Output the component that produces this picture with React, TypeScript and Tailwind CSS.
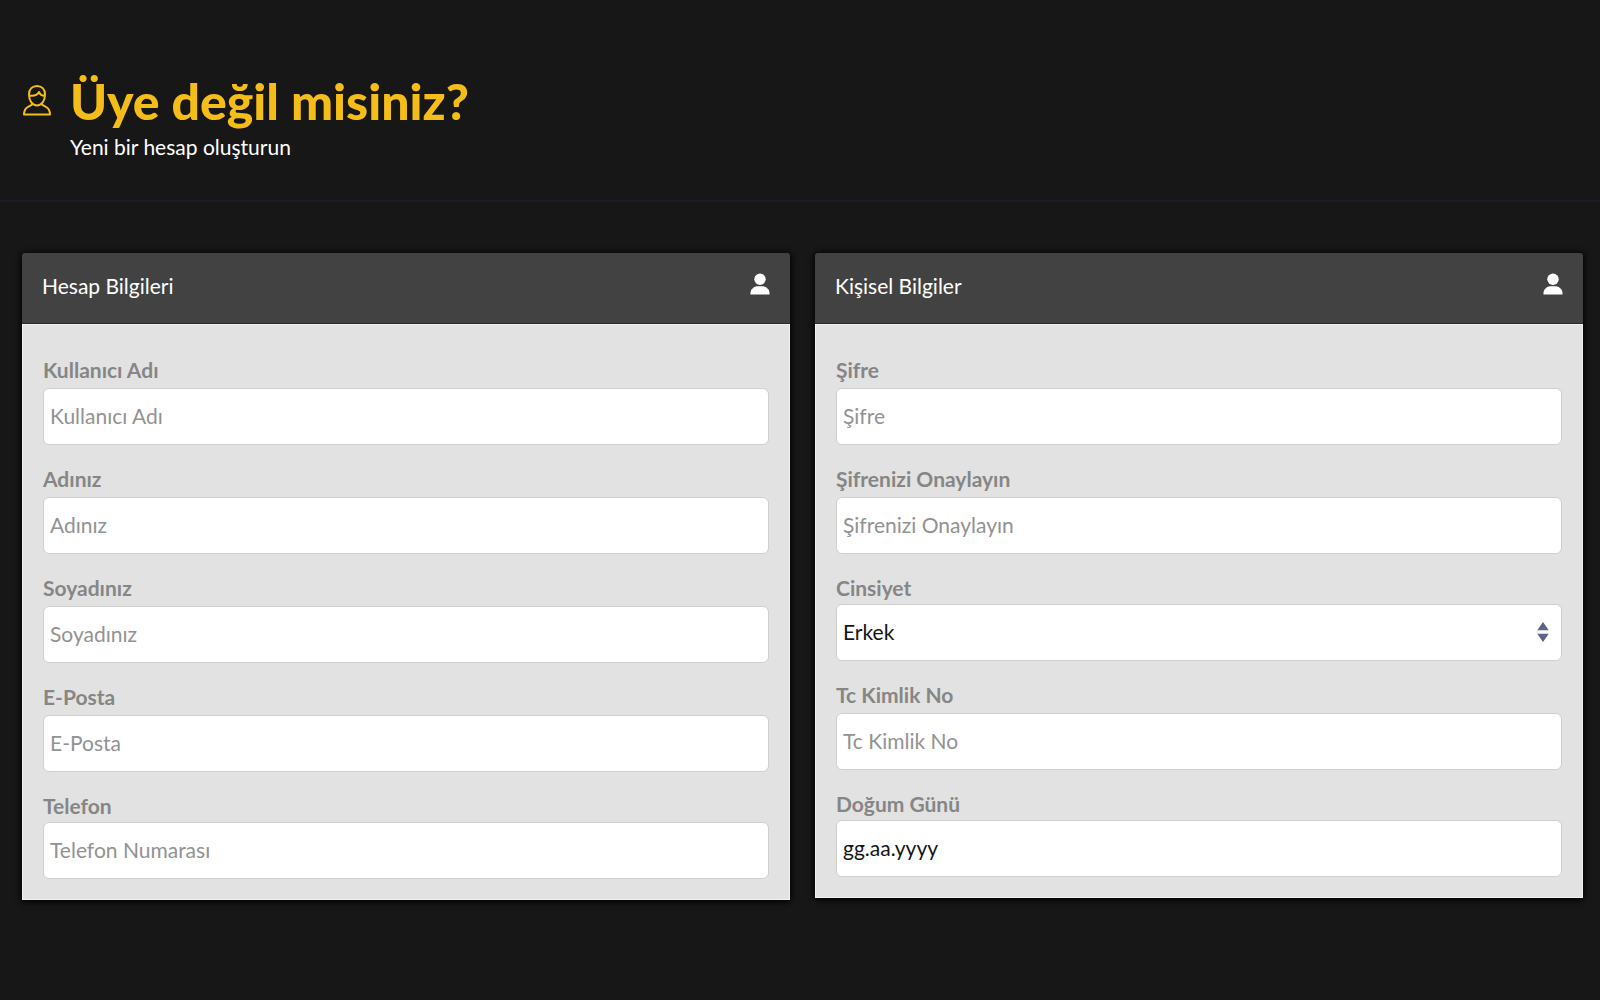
import { useId, type ReactNode } from "react";

interface FieldProps {
  label: string;
  placeholder?: string;
  type?: string;
  compact?: boolean;
  dark?: boolean;
}

const controlClass =
  "block h-[57px] w-full rounded-md border border-[#cfcfcf] bg-white px-[6px] pb-0.5 text-[21px] outline-none focus:border-[#f5bd18]";
const labelClass = "block text-[21px] leading-7 font-bold text-[#868686]";

function Field({ label, placeholder, type = "text", compact, dark }: FieldProps) {
  const id = useId();
  return (
    <div className={compact ? "flex flex-col gap-0.5" : "flex flex-col gap-1"}>
      <label htmlFor={id} className={labelClass}>
        {label}
      </label>
      <input
        id={id}
        type={type}
        placeholder={placeholder ?? label}
        className={`${controlClass} ${dark ? "placeholder:text-[#151515]" : "placeholder:text-[#929292]"}`}
      />
    </div>
  );
}

function GenderField() {
  const id = useId();
  return (
    <div className="flex flex-col gap-0.5">
      <label htmlFor={id} className={labelClass}>
        Cinsiyet
      </label>
      <div className="relative">
        <select id={id} className={`${controlClass} appearance-none text-[#151515]`}>
          <option>Erkek</option>
          <option>Kadın</option>
        </select>
        <svg
          viewBox="0 0 12 20"
          className="pointer-events-none absolute top-[18px] right-[13px] h-5 w-3"
          fill="#5f6288"
          aria-hidden="true"
        >
          <path d="M6 0l5.8 8.3H.2zM6 20L.2 11.7h11.6z" />
        </svg>
      </div>
    </div>
  );
}

function Card({ title, children }: { title: string; children: ReactNode }) {
  return (
    <section className="rounded-[3px] shadow-[0_1px_6px_1px_#000]">
      <header className="flex h-[71px] items-center justify-between rounded-t-[3px] border-b border-[#2a2a2a] bg-[#424242] px-5">
        <h2 className="pb-1 text-[21px] leading-7 text-white">{title}</h2>
        <svg viewBox="0 0 20 22" className="mb-2 h-[22px] w-5" fill="#fff" aria-hidden="true">
          <circle cx="10" cy="6.2" r="5.7" />
          <path d="M.5 21.5v-1.2c0-4.3 3.6-7 7.3-7h4.4c3.7 0 7.3 2.7 7.3 7v1.2z" />
        </svg>
      </header>
      <div className="flex flex-col gap-5 border border-[#f2f2f2] bg-[#e2e2e2] px-5 pt-[31px] pb-5">
        {children}
      </div>
    </section>
  );
}

export default function App() {
  return (
    <div className="min-h-screen bg-[#171717] font-[Lato,'Liberation_Sans',sans-serif]">
      <header className="flex gap-[18px] border-b-2 border-[#191c30] px-[22px] pt-[71px] pb-[37px]">
        <svg
          viewBox="0 0 30 32"
          className="mt-[13px] h-8 w-[30px] shrink-0"
          fill="none"
          stroke="#f5bd18"
          strokeWidth="2"
          strokeLinejoin="round"
          aria-hidden="true"
        >
          <path d="M7 10.5C7 5.2 10.3 2 15 2s8 3.2 8 8.5c0 6.5-3.5 11-8 11s-8-4.5-8-11z" />
          <path d="M7.2 11.6c4 .6 8-.3 9.8-3.600 1.2 2.600 3 4 5.8 3.800" />
          <path d="M10.8 19.6c-.5 1.4-1.6 1.9-4.3 3C3.4 24 2.1 26 2 30.5h26c-.1-4.500-1.400-6.500-4.500-7.900-2.700-1.100-3.800-1.600-4.300-3" />
        </svg>
        <div>
          <h1 className="text-[50px] leading-[60px] font-black text-[#f5bd18]">Üye değil misiniz?</h1>
          <p className="text-[21px] leading-8 text-white">Yeni bir hesap oluşturun</p>
        </div>
      </header>

      <form className="grid grid-cols-2 items-start gap-[25px] pt-[51px] pr-[17px] pb-[100px] pl-[22px]">
        <Card title="Hesap Bilgileri">
          <Field label="Kullanıcı Adı" />
          <Field label="Adınız" />
          <Field label="Soyadınız" />
          <Field label="E-Posta" type="email" />
          <Field label="Telefon" placeholder="Telefon Numarası" type="tel" compact />
        </Card>
        <Card title="Kişisel Bilgiler">
          <Field label="Şifre" type="password" />
          <Field label="Şifrenizi Onaylayın" type="password" />
          <GenderField />
          <Field label="Tc Kimlik No" />
          <Field label="Doğum Günü" placeholder="gg.aa.yyyy" compact dark />
        </Card>
      </form>
    </div>
  );
}
